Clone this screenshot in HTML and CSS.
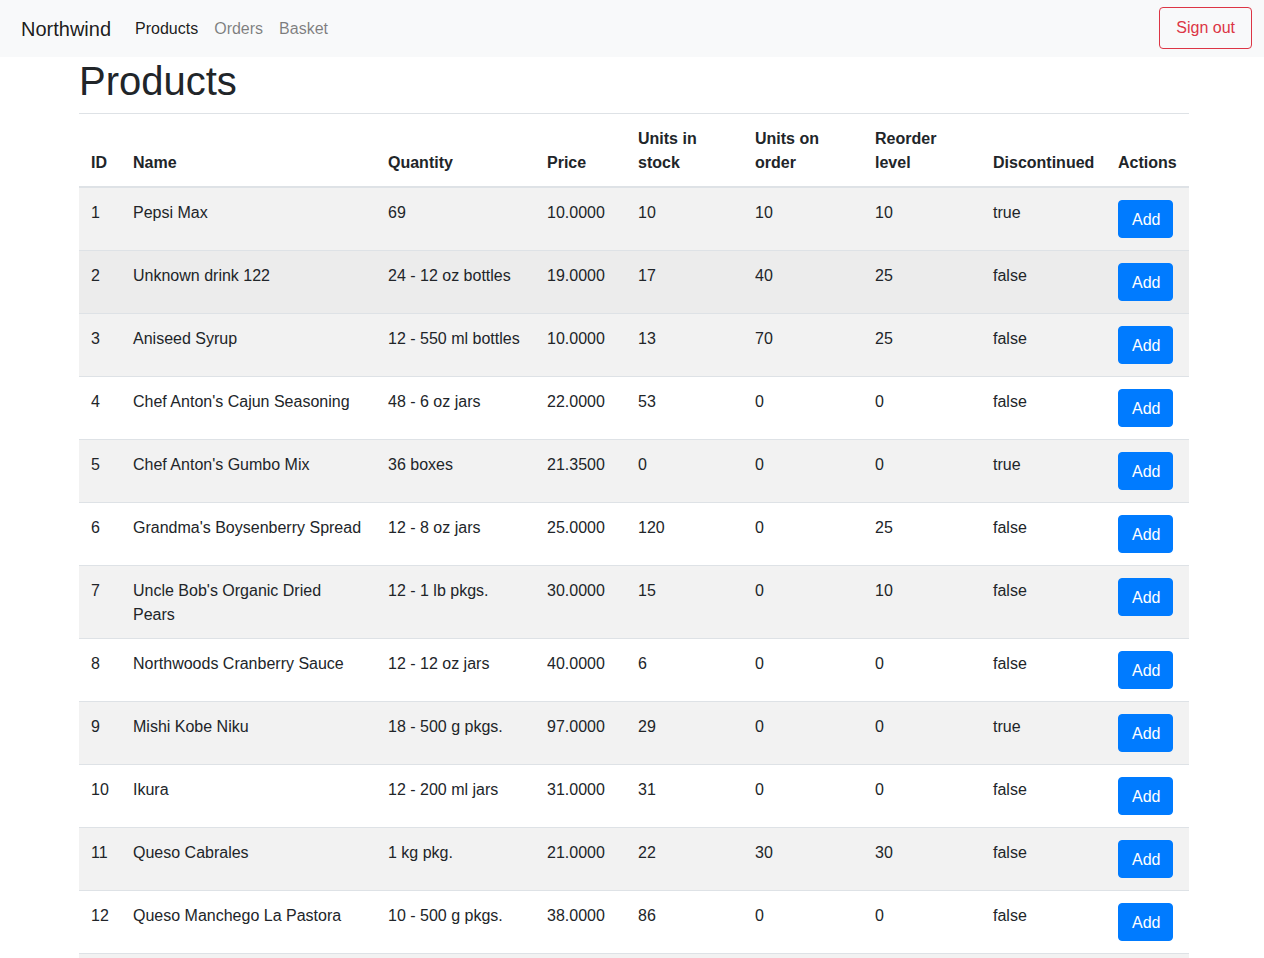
FILE: index.html
```html
<!DOCTYPE html>
<html lang="en">
<head>
<meta charset="utf-8">
<title>Products - Northwind</title>
<link rel="stylesheet" href="styles.css">
</head>
<body>
<nav class="navbar">
  <a class="brand" href="#">Northwind</a>
  <ul class="nav">
    <li><a class="nav-link active" href="#">Products</a></li>
    <li><a class="nav-link" href="#">Orders</a></li>
    <li><a class="nav-link" href="#">Basket</a></li>
  </ul>
  <button class="btn btn-outline-danger" type="button">Sign out</button>
</nav>
<main class="container">
  <h1 class="title">Products</h1>
  <table class="table">
    <colgroup>
      <col class="c-id"><col class="c-name"><col class="c-qty"><col class="c-price"><col class="c-stock"><col class="c-order"><col class="c-reorder"><col class="c-disc"><col class="c-act">
    </colgroup>
    <thead>
      <tr><th>ID</th><th>Name</th><th>Quantity</th><th>Price</th><th>Units in stock</th><th>Units on order</th><th>Reorder level</th><th>Discontinued</th><th>Actions</th></tr>
    </thead>
    <tbody>
      <tr><td>1</td><td>Pepsi Max</td><td>69</td><td>10.0000</td><td>10</td><td>10</td><td>10</td><td>true</td><td><button class="btn btn-primary" type="button">Add</button></td></tr>
      <tr class="hover"><td>2</td><td>Unknown drink 122</td><td>24 - 12 oz bottles</td><td>19.0000</td><td>17</td><td>40</td><td>25</td><td>false</td><td><button class="btn btn-primary" type="button">Add</button></td></tr>
      <tr><td>3</td><td>Aniseed Syrup</td><td>12 - 550 ml bottles</td><td>10.0000</td><td>13</td><td>70</td><td>25</td><td>false</td><td><button class="btn btn-primary" type="button">Add</button></td></tr>
      <tr><td>4</td><td>Chef Anton's Cajun Seasoning</td><td>48 - 6 oz jars</td><td>22.0000</td><td>53</td><td>0</td><td>0</td><td>false</td><td><button class="btn btn-primary" type="button">Add</button></td></tr>
      <tr><td>5</td><td>Chef Anton's Gumbo Mix</td><td>36 boxes</td><td>21.3500</td><td>0</td><td>0</td><td>0</td><td>true</td><td><button class="btn btn-primary" type="button">Add</button></td></tr>
      <tr><td>6</td><td>Grandma's Boysenberry Spread</td><td>12 - 8 oz jars</td><td>25.0000</td><td>120</td><td>0</td><td>25</td><td>false</td><td><button class="btn btn-primary" type="button">Add</button></td></tr>
      <tr><td>7</td><td>Uncle Bob's Organic Dried Pears</td><td>12 - 1 lb pkgs.</td><td>30.0000</td><td>15</td><td>0</td><td>10</td><td>false</td><td><button class="btn btn-primary" type="button">Add</button></td></tr>
      <tr><td>8</td><td>Northwoods Cranberry Sauce</td><td>12 - 12 oz jars</td><td>40.0000</td><td>6</td><td>0</td><td>0</td><td>false</td><td><button class="btn btn-primary" type="button">Add</button></td></tr>
      <tr><td>9</td><td>Mishi Kobe Niku</td><td>18 - 500 g pkgs.</td><td>97.0000</td><td>29</td><td>0</td><td>0</td><td>true</td><td><button class="btn btn-primary" type="button">Add</button></td></tr>
      <tr><td>10</td><td>Ikura</td><td>12 - 200 ml jars</td><td>31.0000</td><td>31</td><td>0</td><td>0</td><td>false</td><td><button class="btn btn-primary" type="button">Add</button></td></tr>
      <tr><td>11</td><td>Queso Cabrales</td><td>1 kg pkg.</td><td>21.0000</td><td>22</td><td>30</td><td>30</td><td>false</td><td><button class="btn btn-primary" type="button">Add</button></td></tr>
      <tr><td>12</td><td>Queso Manchego La Pastora</td><td>10 - 500 g pkgs.</td><td>38.0000</td><td>86</td><td>0</td><td>0</td><td>false</td><td><button class="btn btn-primary" type="button">Add</button></td></tr>
      <tr><td>13</td><td>Konbu</td><td>2 kg box</td><td>6.0000</td><td>24</td><td>0</td><td>5</td><td>false</td><td><button class="btn btn-primary" type="button">Add</button></td></tr>
    </tbody>
  </table>
</main>
</body>
</html>
```
FILE: styles.css
```css
* { box-sizing: border-box; }

html, body {
  margin: 0;
  padding: 0;
}

body {
  font-family: "Liberation Sans", Arial, sans-serif;
  font-size: 16px;
  line-height: 1.5;
  color: #212529;
  background: #fff;
}

.navbar {
  display: flex;
  align-items: center;
  height: 57px;
  padding: 7px 12px 8px 21px;
  background: #f8f9fa;
}

.brand {
  font-size: 20px;
  line-height: 30px;
  padding: 6px 0 4px;
  margin-right: 16px;
  color: rgba(0, 0, 0, 0.9);
  text-decoration: none;
}

.nav {
  display: flex;
  list-style: none;
  margin: 0;
  padding: 0;
  flex: 1;
}

.nav-link {
  display: block;
  padding: 9px 8px 7px;
  color: rgba(0, 0, 0, 0.5);
  text-decoration: none;
}

.nav-link.active {
  color: rgba(0, 0, 0, 0.9);
}

.btn {
  display: inline-block;
  font-family: inherit;
  font-size: 16px;
  line-height: 24px;
  border: 1px solid transparent;
  border-radius: 4px;
  padding: 6px 12px;
  cursor: pointer;
}

.btn-outline-danger {
  color: #dc3545;
  border-color: #dc3545;
  background: transparent;
  padding: 8px 16px;
}

.btn-primary {
  color: #fff;
  background: #007bff;
  border-color: #007bff;
  padding: 7px 12px 5px 13px;
}

.container {
  width: 1110px;
  margin-left: 79px;
}

.title {
  font-size: 40px;
  font-weight: 500;
  line-height: 1.2;
  margin: 0 0 8px;
}

.table {
  width: 100%;
  table-layout: fixed;
  border-collapse: collapse;
  color: #212529;
}

.c-id { width: 42px; }
.c-name { width: 255px; }
.c-qty { width: 159px; }
.c-price { width: 91px; }
.c-stock { width: 117px; }
.c-order { width: 120px; }
.c-reorder { width: 118px; }
.c-disc { width: 125px; }
.c-act { width: 83px; }

.table th,
.table td {
  padding: 13px 12px 11px;
  text-align: left;
  vertical-align: top;
  border-top: 1px solid #dee2e6;
}

.table td:last-child {
  padding-top: 12px;
  padding-bottom: 12px;
}

.table thead th {
  vertical-align: bottom;
  font-weight: 700;
  border-bottom: 2px solid #dee2e6;
}

.table tbody tr:nth-child(odd) {
  background: rgba(0, 0, 0, 0.05);
}

.table tbody tr.hover {
  background: rgba(0, 0, 0, 0.075);
}
```
